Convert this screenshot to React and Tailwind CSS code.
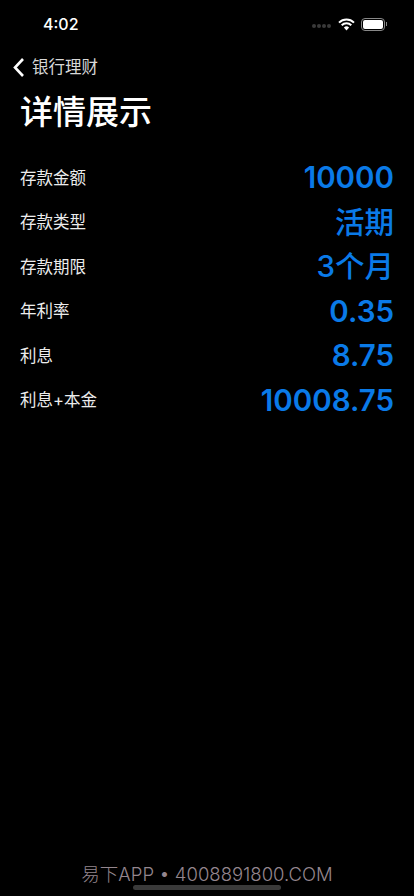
import React from "react";

const font = { fontFamily: '"Inter", "Noto Sans CJK SC", sans-serif' };

const rows = [
  ["存款金额", "10000", "font-semibold"],
  ["存款类型", "活期", "font-medium"],
  ["存款期限", "3个月", "font-medium"],
  ["年利率", "0.35", "font-semibold"],
  ["利息", "8.75", "font-semibold"],
  ["利息+本金", "10008.75", "font-semibold"],
];

const App = () => {
  return (
    <div className="relative h-[896px] w-[414px] overflow-hidden bg-black text-white flex flex-col" style={font}>
      {/* status bar */}
      <div className="h-[48px] flex items-center justify-between pl-[43px] pr-[27px]">
        <span className="text-[16px] font-medium leading-none">4:02</span>
        <div className="flex items-center">
          <div className="flex gap-[1px] mr-[7px] mt-[4px]">
            <span className="w-[4px] h-[4px] rounded-full bg-[#3a3a3a]"></span>
            <span className="w-[4px] h-[4px] rounded-full bg-[#3a3a3a]"></span>
            <span className="w-[4px] h-[4px] rounded-full bg-[#3a3a3a]"></span>
            <span className="w-[4px] h-[4px] rounded-full bg-[#3a3a3a]"></span>
          </div>
          <svg width="17" height="13" viewBox="0 0 17 13" className="mr-[6px]">
            <path d="M1 4.6a10.6 10.6 0 0 1 15 0" fill="none" stroke="#fff" strokeWidth="2" />
            <path d="M3.7 7.3a6.8 6.8 0 0 1 9.6 0" fill="none" stroke="#fff" strokeWidth="2" />
            <path d="M8.5 12.5 5.9 9.6a3.7 3.7 0 0 1 5.2 0z" fill="#fff" />
          </svg>
          <div className="w-[24px] h-[13px] rounded-[4px] border border-[#888] p-[1px]">
            <div className="w-full h-full rounded-[2px] bg-white"></div>
          </div>
          <div className="w-[1px] h-[4px] bg-[#888] ml-[1px]"></div>
        </div>
      </div>

      {/* nav */}
      <div className="h-[38px] flex items-center pl-[12px]">
        <svg width="13" height="21" viewBox="0 0 13 21" className="mr-[7px]">
          <path d="M11 2 3 10.5 11 19" fill="none" stroke="#fff" strokeWidth="2.6" />
        </svg>
        <span className="text-[16.5px] text-[#d8d8d8]">银行理财</span>
      </div>

      <h1 className="pl-[20px] mt-[2px] text-[33px] leading-[48px] font-medium">详情展示</h1>

      {/* rows */}
      <div className="mt-[19px] px-[20px] flex flex-col">
        {rows.map(([label, value, weight]) => (
          <div key={label} className="h-[44.5px] flex items-center justify-between">
            <span className="text-[16.5px] pt-[2px] text-[#ececec]">{label}</span>
            <span className={`text-[29.5px] text-[#0a7ae8] ${weight}`}>{value}</span>
          </div>
        ))}
      </div>

      {/* watermark + home bar */}
      <div className="absolute bottom-[6px] left-[133px] w-[148px] h-[5px] rounded-full bg-[#3a3a3a]"></div>
      <div className="absolute bottom-[8px] left-0 w-full text-center text-[18.5px] font-light leading-[28px] text-[#94868e]">
        易下APP • 4008891800.COM
      </div>
    </div>
  );
};

export default App;
